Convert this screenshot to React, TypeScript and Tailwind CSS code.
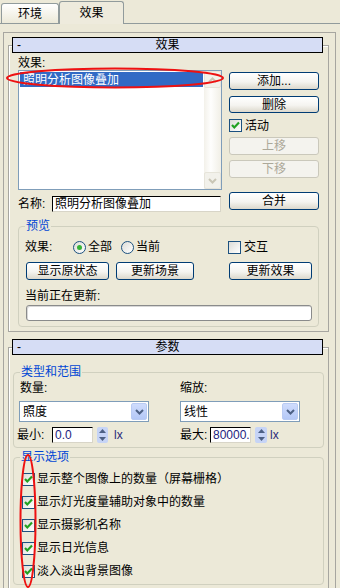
import React from "react";

const font = "font-['Liberation_Sans','Noto_Sans_CJK_SC',sans-serif]";

interface IBtn {
  label: string;
  className?: string;
  disabled?: boolean;
}

const Btn = ({ label, className = "", disabled }: IBtn) => (
  <div
    className={`flex shrink-0 items-center justify-center rounded-[3px] border leading-[14px] ${
      disabled
        ? "border-[#cac8bb] bg-[#f4f3ee] text-[#aca899]"
        : "border-[#003c74] bg-[linear-gradient(180deg,#ffffff_0%,#f5f4f0_55%,#dcd8cc_100%)] text-black"
    } ${className}`}
  >
    {label}
  </div>
);

const Check = ({ checked }: { checked?: boolean }) => (
  <div className="flex h-[13px] w-[13px] shrink-0 items-center justify-center border border-[#1c5180] bg-[linear-gradient(135deg,#dcdcd7,#ffffff)]">
    {checked && (
      <svg width="11" height="11" viewBox="0 0 11 11">
        <path d="M2 5 L4.3 7.4 L9 2.6" fill="none" stroke="#21a121" strokeWidth="2.2" />
      </svg>
    )}
  </div>
);

const Radio = ({ checked }: { checked?: boolean }) => (
  <div className="flex h-[13px] w-[13px] shrink-0 items-center justify-center rounded-full border border-[#1c5180] bg-[linear-gradient(135deg,#dcdcd7,#ffffff)]">
    {checked && <div className="h-[5px] w-[5px] rounded-full bg-[#36b336]" />}
  </div>
);

const Combo = ({ value, className = "" }: { value: string; className?: string }) => (
  <div className={`flex h-[21px] shrink-0 items-center border border-[#7f9db9] bg-white pl-[3px] pr-[1px] ${className}`}>
    <span className="flex-1 leading-[14px]">{value}</span>
    <div className="flex h-[17px] w-[16px] items-center justify-center rounded-[2px] border border-[#b9cbf3] bg-[linear-gradient(180deg,#cfdcfd,#b4c8f6)]">
      <svg width="9" height="6" viewBox="0 0 9 6">
        <path d="M1 1 L4.5 4.5 L8 1" fill="none" stroke="#4d6185" strokeWidth="2" />
      </svg>
    </div>
  </div>
);

const Spinner = ({ className = "" }: { className?: string }) => (
  <div className={`flex h-[16px] shrink-0 flex-col items-center justify-between rounded-[2px] bg-[#c6d4f6] py-[2px] ${className}`}>
    <svg width="7" height="4" viewBox="0 0 7 4">
      <path d="M0 4 L3.5 0 L7 4 Z" fill="#4d6185" />
    </svg>
    <svg width="7" height="4" viewBox="0 0 7 4">
      <path d="M0 0 L3.5 4 L7 0 Z" fill="#4d6185" />
    </svg>
  </div>
);

const Edit = ({ value, className = "" }: { value: string; className?: string }) => (
  <div
    className={`flex h-[16px] shrink-0 items-center overflow-hidden whitespace-nowrap border border-t-black border-l-black border-r-[#d8d5c8] border-b-[#d8d5c8] bg-white pl-[2px] leading-[14px] ${className}`}
  >
    {value}
  </div>
);

const Rollout = ({ title, className = "", children }: { title: string; className?: string; children: React.ReactNode }) => (
  <div className={`ml-[4px] w-[321px] border border-[#a7a6a0] shadow-[inset_1px_1px_0_#ffffff] ${className}`}>
    <div className="-mt-[9px] ml-[3px] grid h-[16px] w-[311px] grid-cols-[16px_1fr_16px] items-center border border-black bg-[#d6ddf5] leading-[14px]">
      <span className="pl-[4px]">-</span>
      <span className="text-center">{title}</span>
      <span />
    </div>
    {children}
  </div>
);

const Group = ({ title, className = "", children }: { title: string; className?: string; children: React.ReactNode }) => (
  <fieldset className={`rounded-[4px] border border-[#d0d0bf] ${className}`}>
    <legend className="ml-[6px] px-[1px] leading-[12px] text-[#0046d5]">{title}</legend>
    {children}
  </fieldset>
);

export default function App() {
  const options = [
    "显示整个图像上的数量（屏幕栅格）",
    "显示灯光度量辅助对象中的数量",
    "显示摄影机名称",
    "显示日光信息",
    "淡入淡出背景图像",
  ];

  return (
    <div className={`relative h-[588px] w-[340px] overflow-hidden bg-[#ece9d8] text-[12px] text-black ${font}`}>
      {/* tabs */}
      <div className="flex h-[24px] items-end border-b border-[#919b9c]">
        <div className="ml-[1px] flex h-[20px] w-[58px] items-center justify-center rounded-t-[3px] border border-b-0 border-[#919b9c] bg-[linear-gradient(180deg,#ffffff,#ece9d8)] leading-[14px]">
          环境
        </div>
        <div className="-mb-[1px] flex h-[23px] w-[65px] items-center justify-center rounded-t-[3px] border border-b-0 border-[#919b9c] bg-[#eeebdd] leading-[14px]">
          效果
        </div>
      </div>

      {/* command panel frame */}
      <div className="ml-[3px] mt-[8px] h-[600px] w-[333px] border border-b-0 border-[#a7a6a0] pt-[12px]">
        <Rollout title="效果" className="pb-[4px]">
          <div className="ml-[9px] mt-[3px] h-[14px] leading-[14px]">效果:</div>
          <div className="flex items-start">
            <div className="ml-[9px] flex flex-col">
              <div className="flex h-[120px] w-[204px] border border-[#7f9db9] bg-white">
                <div className="flex-1 p-[1px]">
                  <div className="flex h-[15px] items-center bg-[#316ac5] pl-[3px] leading-[14px] text-white">
                    照明分析图像叠加
                  </div>
                </div>
                <div className="flex w-[17px] flex-col justify-between bg-[linear-gradient(90deg,#f3f1ea,#fefefd_40%,#f1efe6)]">
                  <div className="flex h-[17px] items-center justify-center rounded-[2px] border border-[#e6e4da] bg-[#f2f1eb]">
                    <svg width="9" height="6" viewBox="0 0 9 6">
                      <path d="M1 5 L4.5 1.5 L8 5" fill="none" stroke="#c9c6b6" strokeWidth="2" />
                    </svg>
                  </div>
                  <div className="flex h-[17px] items-center justify-center rounded-[2px] border border-[#e6e4da] bg-[#f2f1eb]">
                    <svg width="9" height="6" viewBox="0 0 9 6">
                      <path d="M1 1 L4.5 4.5 L8 1" fill="none" stroke="#c9c6b6" strokeWidth="2" />
                    </svg>
                  </div>
                </div>
              </div>
              <div className="mt-[6px] flex items-center">
                <span className="w-[34px] leading-[14px]">名称:</span>
                <Edit value="照明分析图像叠加" className="w-[169px]" />
              </div>
            </div>

            <div className="ml-[7px] flex w-[90px] flex-col pt-[2px]">
              <Btn label="添加..." className="h-[18px]" />
              <Btn label="删除" className="mt-[6px] h-[17px]" />
              <div className="mt-[6px] flex h-[13px] items-center gap-[3px]">
                <Check checked />
                <span className="leading-[14px]">活动</span>
              </div>
              <Btn label="上移" disabled className="mt-[5px] h-[18px]" />
              <Btn label="下移" disabled className="mt-[5px] h-[18px]" />
              <Btn label="合并" className="mt-[14px] h-[18px]" />
            </div>
          </div>

          <Group title="预览" className="ml-[9px] mt-[8px] w-[301px] pb-[5px]">
            <div className="mt-[8px] flex h-[14px] items-center pl-[6px] leading-[14px]">
              <span className="w-[48px]">效果:</span>
              <Radio checked />
              <span className="ml-[2px]">全部</span>
              <div className="ml-[9px]">
                <Radio />
              </div>
              <span className="ml-[2px]">当前</span>
              <div className="ml-[68px] flex items-center gap-[3px]">
                <Check />
                <span>交互</span>
              </div>
            </div>
            <div className="mt-[8px] flex pl-[7px]">
              <Btn label="显示原状态" className="h-[18px] w-[83px]" />
              <Btn label="更新场景" className="ml-[7px] h-[18px] w-[78px]" />
              <Btn label="更新效果" className="ml-[35px] h-[18px] w-[83px]" />
            </div>
            <div className="mt-[9px] h-[14px] pl-[6px] leading-[14px]">当前正在更新:</div>
            <div className="ml-[7px] mt-[2px] h-[16px] w-[286px] rounded-[3px] border border-[#8a8b8b] bg-white shadow-[inset_1px_1px_0_#d8d8d8]" />
          </Group>
        </Rollout>

        <Rollout title="参数" className="mt-[15px] h-[400px]">
          <Group title="类型和范围" className="ml-[4px] mt-[11px] w-[311px] pb-[4px]">
            <div className="mt-[3px] flex h-[14px] items-center pl-[6px] leading-[14px]">
              <span className="w-[160px]">数量:</span>
              <span>缩放:</span>
            </div>
            <div className="mt-[6px] flex">
              <Combo value="照度" className="ml-[5px] w-[130px]" />
              <Combo value="线性" className="ml-[31px] w-[120px]" />
            </div>
            <div className="mt-[5px] flex h-[16px] items-center pl-[3px] leading-[14px]">
              <div className="flex w-[163px] items-center">
                <span className="w-[35px]">最小:</span>
                <Edit value="0.0" className="w-[41px] text-[#23237e]" />
                <Spinner className="ml-[4px] w-[11px]" />
                <span className="ml-[6px] text-[#2a2a7a]">lx</span>
              </div>
              <span className="w-[30px]">最大:</span>
              <Edit value="80000.0" className="w-[41px] text-[#23237e]" />
              <Spinner className="ml-[4px] w-[12px]" />
              <span className="ml-[3px] text-[#2a2a7a]">lx</span>
            </div>
          </Group>

          <Group title="显示选项" className="ml-[4px] mt-[3px] w-[311px] pb-[6px]">
            <div className="mt-[9px] flex flex-col gap-[9px] pl-[8px]">
              {options.map((item) => (
                <div key={item} className="flex h-[14px] items-center gap-[2px] whitespace-nowrap leading-[14px]">
                  <Check checked />
                  <span>{item}</span>
                </div>
              ))}
            </div>
          </Group>
        </Rollout>
      </div>

      {/* red annotation marks drawn over the panel */}
      <svg className="pointer-events-none absolute left-0 top-0" width="340" height="588" viewBox="0 0 340 588">
        <ellipse cx="115" cy="78" rx="108" ry="9.5" fill="none" stroke="#ee1111" strokeWidth="2" />
        <ellipse cx="28" cy="521" rx="7.5" ry="66" fill="none" stroke="#ee1111" strokeWidth="2" />
      </svg>
    </div>
  );
}
